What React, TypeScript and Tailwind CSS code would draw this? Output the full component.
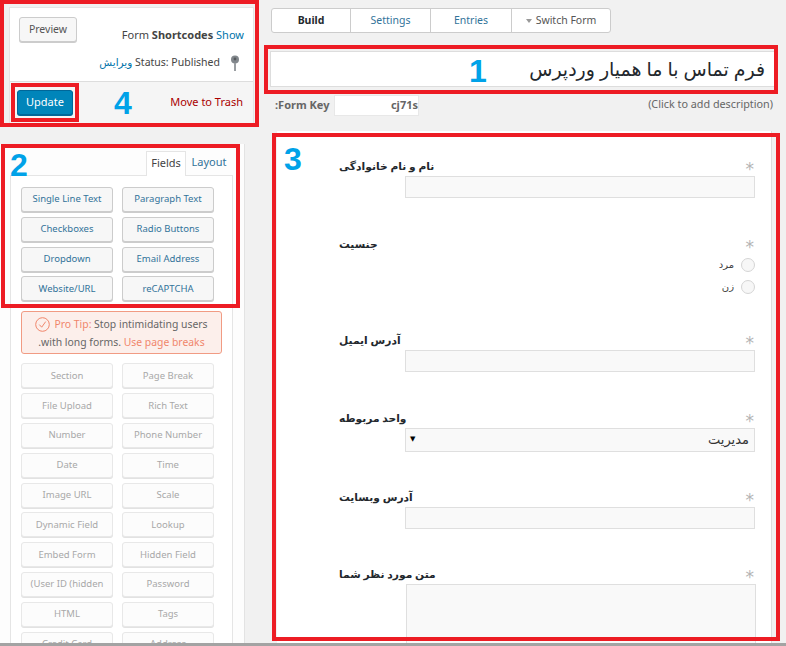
const activeFields = [
  "Single Line Text", "Paragraph Text",
  "Checkboxes", "Radio Buttons",
  "Dropdown", "Email Address",
  "Website/URL", "reCAPTCHA",
];

const proFields = [
  "Section", "Page Break",
  "File Upload", "Rich Text",
  "Number", "Phone Number",
  "Date", "Time",
  "Image URL", "Scale",
  "Dynamic Field", "Lookup",
  "Embed Form", "Hidden Field",
  "(User ID (hidden", "Password",
  "HTML", "Tags",
  "Credit Card", "Address",
];

const FieldRow = ({ label, className, children }: { label: string; className: string; children: React.ReactNode }) => (
  <div className={`ml-[62px] w-[416px] ${className}`}>
    <div className="flex h-[22px] items-center justify-between">
      <span dir="rtl" className="mt-[2px] text-[10.7px] font-bold text-[#23282d]">{label}</span>
      <span className="mr-[1px] mt-[8px] font-['DejaVu_Sans',sans-serif] text-[17px] leading-none text-[#b4b4b4]">*</span>
    </div>
    {children}
  </div>
);

const TextBox = () => (
  <div className="ml-[66px] h-[22px] w-[350px] border border-[#dfdfdf] bg-[#f9f9f9]" />
);

const App = () => {
  return (
    <div className="relative flex h-[646px] w-[786px] overflow-hidden bg-[#f1f1f1] font-['Noto_Sans','DejaVu_Sans',sans-serif] text-[11px]">
      {/* Left column */}
      <div className="relative h-full w-[271px] shrink-0">
        {/* Publish box */}
        <div className="ml-[9px] mt-[7px] h-[116px] w-[245px] border border-[#e5e5e5] bg-white">
          <div className="h-[73px] pl-[9px] pr-[9px] pt-[9px]">
            <div className="flex items-start justify-between">
              <button className="h-[25px] w-[58px] rounded-[3px] border border-[#cccccc] bg-[#f7f7f7] text-[10.5px] text-[#555555] shadow-[0_1px_0_#cccccc]">Preview</button>
              <div className="mt-[10px] text-[#444444]">
                Form <span className="font-bold">Shortcodes</span> <span className="text-[#0073aa]">Show</span>
              </div>
            </div>
            <div className="mt-[11px] flex items-center justify-end gap-[10px] pr-[4px] text-[10.5px] text-[#444444]">
              <span>
                <span dir="rtl" className="text-[#0073aa]">ویرایش</span> Status: Published
              </span>
              <svg width="10" height="16" viewBox="0 0 10 16" className="shrink-0">
                <circle cx="5" cy="4.5" r="4" fill="#82878c" />
                <circle cx="5" cy="4" r="1.4" fill="#55595d" />
                <rect x="4" y="8" width="2" height="8" fill="#9a9ea2" />
              </svg>
            </div>
          </div>
          <div className="flex h-[42px] items-center justify-between border-t border-[#dddddd] bg-[#f5f5f5] pl-[7px] pr-[10px]">
            <button className="h-[25px] w-[56px] rounded-[3px] border border-[#006799] bg-[#0085ba] text-[11px] text-white shadow-[0_1px_0_#006799]">Update</button>
            <span className="text-[#a00]">Move to Trash</span>
          </div>
        </div>

        {/* Sidebar */}
        <div className="absolute bottom-0 left-0 top-[144px] w-[245px] border-r border-[#e3e3e3] bg-[#fdfdfd]">
          <div className="flex h-[31px] justify-end pr-[12px] pt-[7px]">
            <div className="z-10 flex h-[25px] w-[40px] items-center justify-center border border-b-0 border-[#e5e5e5] bg-white pb-[2px] text-[#444444]">Fields</div>
            <div className="flex h-[24px] w-[46px] items-center justify-center pb-[2px] text-[#32739a]">Layout</div>
          </div>
          <div className="ml-[10px] h-full w-[223px] border-x border-t border-[#e5e5e5] bg-white pl-[10px] pt-[11px] text-[9.5px]">
            <div className="grid w-[193px] grid-cols-[92px_92px] gap-x-[9px] gap-y-[4.8px]">
              {activeFields.map((name) => (
                <div key={name} className="flex h-[25px] items-center justify-center whitespace-nowrap rounded-[3px] border border-[#cccccc] bg-[#f7f7f7] text-[#32739a] shadow-[0_1px_0_#cccccc]">
                  {name}
                </div>
              ))}
            </div>
            <div className="mt-[10px] h-[43px] w-[201px] rounded-[3px] border border-[#f19b83] bg-[#fcefeb] pt-[3px] text-center text-[10.4px] leading-[18px] text-[#666666]">
              <div className="flex items-center justify-center gap-[4px]">
                <svg width="15" height="15" viewBox="0 0 15 15" fill="none" stroke="#f0866b" className="shrink-0">
                  <circle cx="7.5" cy="7.5" r="6.8" />
                  <path d="M4.3 7.6l2.4 2.6 4-5.6" />
                </svg>
                <span><span className="text-[#f0866b]">Pro Tip:</span> Stop intimidating users</span>
              </div>
              <div>.with long forms. <span className="text-[#f0866b]">Use page breaks</span></div>
            </div>
            <div className="mt-[9px] grid w-[193px] grid-cols-[92px_92px] gap-x-[9px] gap-y-[4.8px]">
              {proFields.map((name) => (
                <div key={name} className="flex h-[25px] items-center justify-center whitespace-nowrap rounded-[3px] border border-[#e8e8e8] bg-[#fcfcfc] text-[#a8a8a8] shadow-[0_1px_0_#e2e2e2]">
                  {name}
                </div>
              ))}
            </div>
          </div>
        </div>
      </div>

      {/* Main column */}
      <div className="relative min-w-0 flex-1">
        <div className="mt-[8px] flex h-[25px] w-[340px] rounded-[3px] border border-[#cccccc] bg-white text-center text-[10.5px] leading-[23px]">
          <div className="w-[79px] border-r border-[#cccccc] font-bold text-[#23282d]">Build</div>
          <div className="w-[80px] border-r border-[#cccccc] text-[#32739a]">Settings</div>
          <div className="w-[81px] border-r border-[#cccccc] text-[#32739a]">Entries</div>
          <div className="flex flex-1 items-center justify-center gap-[4px] text-[#555555]">
            <span className="mt-[1px] h-0 w-0 border-x-[3px] border-t-[4px] border-x-transparent border-t-[#999999]" />
            Switch Form
          </div>
        </div>

        <div dir="rtl" className="ml-[-1px] mt-[18px] flex h-[36px] w-[505px] items-center border border-[#dddddd] bg-white pr-[9px] text-[19px] text-[#23282d]">
          فرم تماس با ما همیار وردپرس
        </div>

        <div className="flex h-[44px] items-start justify-between pr-[13px] pt-[8px] text-[#666666]">
          <div className="flex h-[21px] items-center pl-[4px]">
            <span className="w-[59px] whitespace-nowrap font-bold">:Form Key</span>
            <div className="flex h-[21px] w-[85px] items-center justify-end border border-[#e8e8e8] bg-white font-bold">cj71s</div>
          </div>
          <span className="mt-[1px] text-[10.8px]">(Click to add description)</span>
        </div>

        {/* Form panel */}
        <div className="ml-[6px] h-[600px] w-[495px] border-r border-[#dddddd] bg-white pt-[23px]">
          <FieldRow label="نام و نام خانوادگی" className="">
            <TextBox />
          </FieldRow>
          <FieldRow label="جنسیت" className="mt-[34px]">
            <div dir="rtl" className="flex flex-col gap-[7px] pt-[3px] text-[10px] text-[#444444]">
              <div className="flex h-[15px] items-center gap-[7px]">
                <span className="h-[14px] w-[14px] rounded-full border border-[#d5d5d5] bg-[#f7f7f7]" />
                <span>مرد</span>
              </div>
              <div className="flex h-[15px] items-center gap-[7px]">
                <span className="h-[14px] w-[14px] rounded-full border border-[#d5d5d5] bg-[#f7f7f7]" />
                <span>زن</span>
              </div>
            </div>
          </FieldRow>
          <FieldRow label="آدرس ایمیل" className="mt-[34px]">
            <TextBox />
          </FieldRow>
          <FieldRow label="واحد مربوطه" className="mt-[34px]">
            <div dir="rtl" className="ml-[66px] flex h-[24px] w-[350px] items-center justify-between border border-[#dfdfdf] bg-[#f9f9f9] pl-[4px] pr-[5px] text-[13px] text-[#333333]">
              <span>مدیریت</span>
              <span className="mb-[3px] text-[7px] leading-none text-black">▼</span>
            </div>
          </FieldRow>
          <FieldRow label="آدرس وبسایت" className="mt-[33px]">
            <TextBox />
          </FieldRow>
          <FieldRow label="متن مورد نظر شما" className="mt-[33px]">
            <div className="ml-[67px] h-[70px] w-[350px] border border-[#dfdfdf] bg-[#f9f9f9]" />
          </FieldRow>
        </div>
      </div>

      {/* Window edge */}
      <div className="absolute bottom-0 left-0 z-20 h-[3px] w-full bg-[#a3a3a3]" />

      {/* Annotation boxes */}
      <div className="absolute left-0 top-0 z-30 h-[127px] w-[259px] border-[4px] border-[#ed1c24]" />
      <div className="absolute left-[11px] top-[83px] z-30 h-[39px] w-[68px] border-[4px] border-[#ed1c24]" />
      <div className="absolute left-[1px] top-[144px] z-30 h-[164px] w-[239px] border-[4px] border-[#ed1c24]" />
      <div className="absolute left-[264px] top-[45px] z-30 h-[49px] w-[514px] border-[4px] border-[#ed1c24]" />
      <div className="absolute left-[272px] top-[133px] z-30 h-[508px] w-[508px] border-[4px] border-[#ed1c24]" />

      {/* Annotation numbers */}
      <span className="absolute left-[114px] top-[83px] z-30 font-['Liberation_Sans',sans-serif] text-[32px] font-bold leading-[40px] text-[#00a2e8]">4</span>
      <span className="absolute left-[10px] top-[145px] z-30 font-['Liberation_Sans',sans-serif] text-[32px] font-bold leading-[40px] text-[#00a2e8]">2</span>
      <span className="absolute left-[469px] top-[51px] z-30 font-['Liberation_Sans',sans-serif] text-[32px] font-bold leading-[40px] text-[#00a2e8]">1</span>
      <span className="absolute left-[284px] top-[139px] z-30 font-['Liberation_Sans',sans-serif] text-[32px] font-bold leading-[40px] text-[#00a2e8]">3</span>
    </div>
  );
};

export default App;
